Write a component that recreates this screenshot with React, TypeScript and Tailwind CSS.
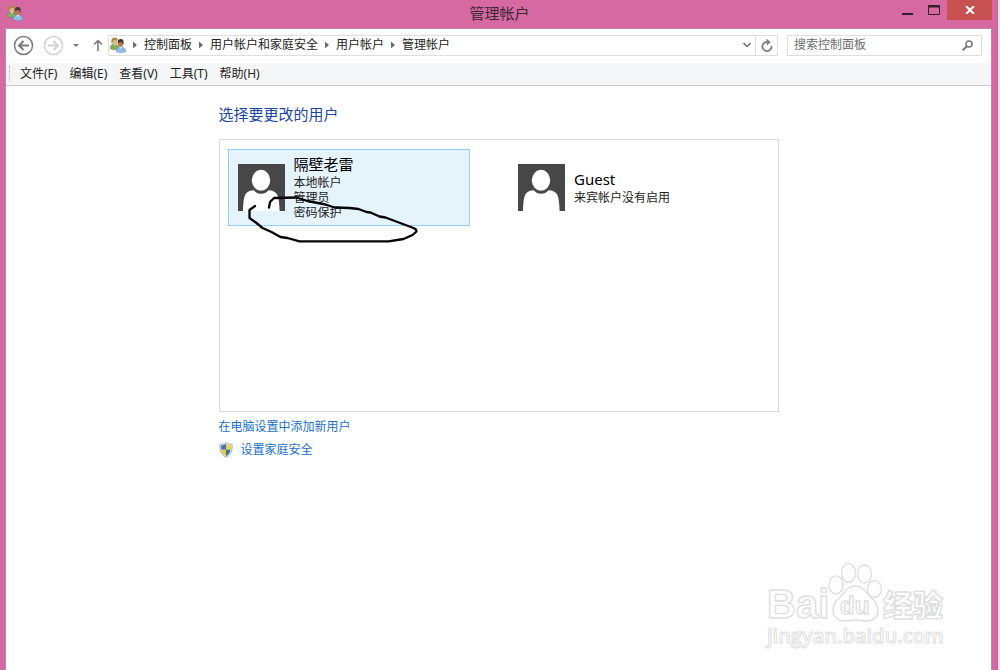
import type { ReactNode } from "react";

const crumbs = ["控制面板", "用户帐户和家庭安全", "用户帐户", "管理帐户"];
const menus = ["文件(F)", "编辑(E)", "查看(V)", "工具(T)", "帮助(H)"];

function UsersIcon() {
  return (
    <svg viewBox="0 0 16 16" className="size-4 shrink-0" aria-hidden="true">
      <path d="M.4 11.800C.2 8.400 1.600 6.900 4.300 6.900s4.400 1.500 4.200 4.900c-2.200 1.100-5.900 1.100-8.100 0z" fill="#7fae5c" stroke="#5f8a49" strokeWidth=".5" />
      <path d="M3.900 7l1 2 1.200-2z" fill="#eef4e2" />
      <ellipse cx="4.700" cy="4.200" rx="2.700" ry="3.200" fill="#dcb784" />
      <path d="M1.600 6.600C.9 2.800 1.900.5 4.700.5c2 0 3.200 1.100 3.200 2.900C6.100 3.600 4.700 3 4 2.800 3.400 3.700 2.900 5 1.600 6.600z" fill="#a98a3c" />
      <path d="M6.400 14.800c-.3-3.200 1.400-4.900 4.500-4.900s4.900 1.700 4.700 4.900c-2.600 1.100-6.800 1.100-9.200 0z" fill="#8fbdea" stroke="#5b8cc2" strokeWidth=".5" />
      <path d="M9.300 9.900l1.400 2 1.300-2z" fill="#e8f2fb" />
      <ellipse cx="10.400" cy="6.700" rx="2.600" ry="3.300" fill="#b57c50" />
      <path d="M7.800 6.200C7.400 3.700 8.600 2.100 10.700 2.100c2.700 0 3.600 2.500 2.600 6-.7-1-1-2.200-1.200-3.200C10.700 5.200 9.200 5 7.800 6.200z" fill="#49362b" />
    </svg>
  );
}

function Arrow({ className, left }: { className: string; left?: boolean }) {
  return (
    <svg viewBox="0 0 21 21" className={className} fill="none" stroke="currentColor" aria-hidden="true">
      <circle cx="10.500" cy="10.500" r="9" strokeWidth="1.500" />
      <path d={left ? "M16 10.500H6M10.500 6L6 10.500l4.500 4.500" : "M5 10.500h10M10.500 6l4.500 4.500-4.500 4.500"} strokeWidth="2" />
    </svg>
  );
}

function CrumbArrow() {
  return (
    <span className="flex w-[18px] shrink-0 justify-center">
      <svg viewBox="0 0 4 8" className="h-2 w-1" aria-hidden="true">
        <path d="M0 0.500L4 4L0 7.500z" fill="#6a6a6a" />
      </svg>
    </span>
  );
}

function Avatar() {
  return (
    <svg viewBox="0 0 47 47" className="size-[47px] shrink-0" aria-hidden="true">
      <path d="M0 0h47v47H0z" fill="#474747" />
      <ellipse cx="23" cy="16.300" rx="9.200" ry="10.500" fill="#fff" />
      <path d="M5 47c.2-8 .8-14 2.600-17 1.500-2.500 4.700-3.600 8.200-3.800 2 2.400 4.500 3.600 7.400 3.600s5.400-1.200 7.400-3.600c3.500.2 6.700 1.300 8.200 3.800 1.800 3 2.600 9 2.800 17z" fill="#fff" />
    </svg>
  );
}

function Account({ name, details, selected, children }: { name: string; details: string[]; selected?: boolean; children?: ReactNode }) {
  return (
    <div className="relative w-[242px] max-w-full">
      <button
        type="button"
        className={
          selected
            ? "flex h-[77px] w-full items-center gap-[9px] border border-[#8fd0f0] bg-[#e5f3fb] px-[9px] text-left"
            : "flex h-[77px] w-full items-center gap-[9px] border border-transparent px-[9px] text-left hover:bg-[#f2f9fd]"
        }
      >
        <Avatar />
        <span className="flex flex-col pb-0.5">
          <span className="text-[15px] leading-[22px] text-black">{name}</span>
          {details.map((d) => (
            <span key={d} className="text-xs leading-[15px] text-[#222]">{d}</span>
          ))}
        </span>
      </button>
      {children}
    </div>
  );
}

function Shield() {
  return (
    <svg viewBox="0 0 14 16" className="h-4 w-3.5 shrink-0" aria-hidden="true">
      <path d="M7 .5C5.300 1.800 3 2.300 .8 2.200c-.4 6.300 1 10.600 6.200 13.300 5.200-2.700 6.600-7 6.200-13.300C11 2.300 8.700 1.800 7 .5z" fill="#d9dcdf" stroke="#9a9fa4" strokeWidth=".7" />
      <path d="M7 2.100C5.500 3 3.900 3.400 2.200 3.400c-.1 1.600 0 3 .3 4.300H7z" fill="#3b78b8" />
      <path d="M7 2.100C8.500 3 10.100 3.400 11.800 3.400c.1 1.600 0 3-.3 4.300H7z" fill="#f2cf45" />
      <path d="M2.500 7.700c.7 2.900 2.100 4.900 4.500 6.300V7.700z" fill="#edc63a" />
      <path d="M11.500 7.700c-.7 2.900-2.100 4.900-4.500 6.300V7.700z" fill="#3370ad" />
    </svg>
  );
}

function Watermark() {
  return (
    <svg
      viewBox="0 0 190 94"
      className="pointer-events-none absolute right-[36px] bottom-[16px] h-[94px] w-[190px]"
      fill="#fff"
      stroke="#dedede"
      strokeWidth="1.400"
    >
      <text x="2" y="58" fontSize="40" fontWeight="700" fontFamily="'Liberation Sans', Arial, sans-serif">Bai</text>
      <ellipse cx="71" cy="25" rx="7" ry="9" />
      <ellipse cx="83.500" cy="13" rx="7" ry="9.500" />
      <ellipse cx="99.500" cy="14" rx="7" ry="9" />
      <ellipse cx="109.500" cy="29" rx="7" ry="8.500" />
      <path d="M90 26c6 0 9 3 12 7 4 5 11 9 11 17 0 7-5 11-12 11-4 0-7-1-11-1s-7 1-11 1c-7 0-11-5-11-11 0-8 6-11 10-16 3-4 6-8 12-8z" />
      <text x="75" y="54" fontSize="24" fontFamily="'Liberation Sans', Arial, sans-serif" fontWeight="700">du</text>
      <text x="118" y="56" fontSize="30" fontWeight="900" fontFamily="'Noto Sans CJK SC', sans-serif">经验</text>
      <text x="2" y="83" fontSize="20" strokeWidth="1" fontWeight="600" fontFamily="'Open Sans', sans-serif">jingyan.baidu.com</text>
    </svg>
  );
}

export default function App() {
  return (
    <div className="flex min-h-screen bg-[#e9e6e8] pr-0.5 font-['Noto_Sans','Noto_Sans_CJK_SC',sans-serif] text-xs text-[#222]">
      <div className="flex flex-1 flex-col border-r border-[#c0659a] bg-[#d669a2]">
        <header className="grid h-7 grid-cols-[1fr_auto_1fr] items-center pr-[5px] pb-0.5 pl-[7px]">
          <UsersIcon />
          <h1 className="text-[15px] leading-5 text-[#3a2832]">管理帐户</h1>
          <div className="flex items-start justify-end self-start text-[#33202a]">
            <button type="button" aria-label="最小化" className="flex h-5 w-[26px] justify-center">
              <svg viewBox="0 0 12 20" className="h-5 w-3"><path d="M0 13h11v2H0z" fill="currentColor" /></svg>
            </button>
            <button type="button" aria-label="最大化" className="flex h-5 w-[26px] justify-center">
              <svg viewBox="0 0 12 20" className="h-5 w-3" fill="none" stroke="currentColor"><path d="M.5 5.500h11v9H.5z" /><path d="M0 6.500h12" strokeWidth="2" /></svg>
            </button>
            <button type="button" aria-label="关闭" className="flex h-5 w-[45px] items-center justify-center bg-[#c75050]">
              <svg viewBox="0 0 10 8" className="h-2 w-2.5" stroke="#fff" strokeWidth="2"><path d="M1 0l8 8M9 0L1 8" /></svg>
            </button>
          </div>
        </header>

        <div className="relative mr-[5px] ml-[5px] flex flex-1 flex-col border-x border-t border-[#c487a8] bg-white">
          <nav className="flex h-[34px] items-center pr-[9px] pb-0.5 pl-[7px]" aria-label="地址">
            <button type="button" aria-label="后退"><Arrow left className="size-[21px] text-[#7c7c7c]" /></button>
            <button type="button" aria-label="前进" className="ml-[9px]"><Arrow className="size-[21px] text-[#d3d3d3]" /></button>
            <button type="button" aria-label="最近的位置" className="flex w-6 justify-center">
              <svg viewBox="0 0 6 3" className="h-[3px] w-1.5"><path d="M0 0h6L3 3z" fill="#777" /></svg>
            </button>
            <button type="button" aria-label="上移" className="flex w-[19px] justify-center">
              <svg viewBox="0 0 10 12" className="h-3 w-2.5" fill="none" stroke="#777" strokeWidth="1.500"><path d="M5 12V1.500M1 5.500l4-4 4 4" /></svg>
            </button>
            <div className="ml-px flex h-[21px] min-w-0 flex-1 items-center border border-[#dedede] pl-px">
              <UsersIcon />
              {crumbs.map((c) => (
                <span key={c} className="flex items-center">
                  <CrumbArrow />
                  <button type="button" className="whitespace-nowrap leading-4">{c}</button>
                </span>
              ))}
              <button type="button" aria-label="历史记录" className="ml-auto flex w-[17px] justify-center">
                <svg viewBox="0 0 8 6" className="h-1.5 w-2" fill="none" stroke="#666" strokeWidth="1.500"><path d="M.5 1L4 4.500 7.500 1" /></svg>
              </button>
              <button type="button" aria-label="刷新" className="flex h-full w-[22px] items-center justify-center border-l border-[#dedede]">
                <svg viewBox="0 0 12 13" className="h-[13px] w-3" fill="none" stroke="#777" strokeWidth="1.700"><path d="M7.500 3.100A4.600 4.600 0 1 0 10.600 7" /><path d="M5.600.5L8.600 3.200 5.600 5.600" strokeWidth="1.400" /></svg>
              </button>
            </div>
            <label className="ml-[9px] flex h-[21px] w-[195px] items-center border border-[#dedede] pr-2 pl-1.5">
              <input type="search" aria-label="搜索控制面板" placeholder="搜索控制面板" className="min-w-0 flex-1 leading-4 outline-none placeholder:text-[#6d6d6d]" />
              <svg viewBox="0 0 11 11" className="size-[11px]" fill="none" stroke="#777" strokeWidth="1.500"><circle cx="7" cy="4" r="3" /><path d="M4.800 6.200L.7 10.300" strokeWidth="2" /></svg>
            </label>
          </nav>

          <div className="flex h-[23px] items-center gap-3 border-b border-[#c9c9c9] bg-[#f5f6f7] pl-[3px]">
            <span className="-mr-0.5 h-4 border-l border-dotted border-[#b5b5b5]" />
            {menus.map((m) => (
              <button key={m} type="button" className="whitespace-nowrap leading-4">{m}</button>
            ))}
          </div>

          <main className="mx-auto w-full max-w-[560px] pt-[17px]">
            <h2 className="text-[15px] leading-[22px] text-[#1c46a0]">选择要更改的用户</h2>
            <div className="mt-3.5 grid min-h-[273px] grid-cols-2 content-start gap-[11px] border border-[#d9d9d9] pt-[9px] pl-2">
              <Account name="隔壁老雷" details={["本地帐户", "管理员", "密码保护"]} selected>
                <svg viewBox="247 195 172 50" className="pointer-events-none absolute top-[46px] left-[19px] h-[50px] w-[172px]" fill="none" stroke="#050505" strokeWidth="2.300" strokeLinecap="round" strokeLinejoin="round" aria-hidden="true">
                  <path d="M255 206L249.500 210v8l7 5 6 5 9 4 9 5 7 1 12 3.300h89l15-2.300 9-4 4-3.500-.5-2-2.500-1.500-8-3-12-4.500-8-3-6-1-9-4-4-.5-8-3-9-1-15-.5-9-3-18-3.500-11-3.500-22.500.5-4 4-1 5.500" />
                </svg>
              </Account>
              <Account name="Guest" details={["来宾帐户没有启用"]} />
            </div>
            <div className="mt-1.5 flex flex-col items-start gap-1.5 text-[#1a6fc9]">
              <a href="#add" className="leading-[17px] hover:underline">在电脑设置中添加新用户</a>
              <a href="#family" className="flex items-center gap-2 leading-[17px] hover:underline"><Shield />设置家庭安全</a>
            </div>
          </main>
          <Watermark />
        </div>
      </div>
    </div>
  );
}
